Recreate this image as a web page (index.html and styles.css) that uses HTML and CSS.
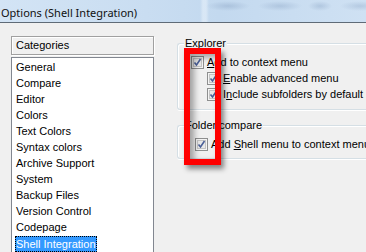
FILE: index.html
```html
<!DOCTYPE html>
<html>
<head>
<meta charset="utf-8">
<link rel="stylesheet" href="styles.css">
</head>
<body>
<div class="titlebar"><span class="title">Options (Shell Integration)</span></div>
<div class="content">
  <div class="left">
    <div class="cat-header">Categories</div>
    <ul class="list">
      <li>General</li>
      <li>Compare</li>
      <li>Editor</li>
      <li>Colors</li>
      <li>Text Colors</li>
      <li>Syntax colors</li>
      <li>Archive Support</li>
      <li>System</li>
      <li>Backup Files</li>
      <li>Version Control</li>
      <li>Codepage</li>
      <li><span class="sel">Shell Integration</span></li>
    </ul>
  </div>
  <div class="right">
    <div class="group explorer">
      <div class="legend">Explorer</div>
      <label class="row"><span class="cb"><svg width="13" height="13" viewBox="0 0 13 13"><rect x="0.5" y="0.5" width="12" height="12" fill="#f4f4f4" stroke="#8e8f8f"/><rect x="2.5" y="2.5" width="8" height="8" fill="#e8e8e8" stroke="#c4c4c4"/><path d="M3.5 6.5 L5.5 9 L9.5 3" fill="none" stroke="#4a5f97" stroke-width="1.6"/></svg></span><span><u>A</u>dd to context menu</span></label>
      <label class="row sub"><span class="cb"><svg width="13" height="13" viewBox="0 0 13 13"><rect x="0.5" y="0.5" width="12" height="12" fill="#f4f4f4" stroke="#8e8f8f"/><rect x="2.5" y="2.5" width="8" height="8" fill="#e8e8e8" stroke="#c4c4c4"/><path d="M3.5 6.5 L5.5 9 L9.5 3" fill="none" stroke="#4a5f97" stroke-width="1.6"/></svg></span><span><u>E</u>nable advanced menu</span></label>
      <label class="row sub"><span class="cb"><svg width="13" height="13" viewBox="0 0 13 13"><rect x="0.5" y="0.5" width="12" height="12" fill="#f4f4f4" stroke="#8e8f8f"/><rect x="2.5" y="2.5" width="8" height="8" fill="#e8e8e8" stroke="#c4c4c4"/><path d="M3.5 6.5 L5.5 9 L9.5 3" fill="none" stroke="#4a5f97" stroke-width="1.6"/></svg></span><span>I<u>n</u>clude subfolders by default</span></label>
    </div>
    <div class="group folder">
      <div class="legend">Folder compare</div>
      <label class="row"><span class="cb"><svg width="13" height="13" viewBox="0 0 13 13"><rect x="0.5" y="0.5" width="12" height="12" fill="#f4f4f4" stroke="#8e8f8f"/><rect x="2.5" y="2.5" width="8" height="8" fill="#e8e8e8" stroke="#c4c4c4"/><path d="M3.5 6.5 L5.5 9 L9.5 3" fill="none" stroke="#4a5f97" stroke-width="1.6"/></svg></span><span>Add <u>S</u>hell menu to context menu</span></label>
    </div>
  </div>
</div>
<div class="redbox"></div>
</body>
</html>
```
FILE: styles.css
```css
html, body {
  margin: 0;
  padding: 0;
  width: 366px;
  height: 252px;
  overflow: hidden;
  background: #f0f0f0;
  font-family: "Liberation Sans", Arial, sans-serif;
  font-size: 11px;
  color: #000;
  position: relative;
}
.titlebar {
  height: 22px;
  background:
    radial-gradient(ellipse 22px 5px at 228px 6px, rgba(150,175,205,0.55), transparent),
    radial-gradient(ellipse 22px 5px at 280px 6px, rgba(150,175,205,0.5), transparent),
    radial-gradient(ellipse 12px 5px at 320px 6px, rgba(150,175,205,0.5), transparent),
    radial-gradient(ellipse 20px 5px at 360px 6px, rgba(150,175,205,0.45), transparent),
    linear-gradient(90deg, transparent 200px, rgba(230,240,250,0.6) 203px, rgba(230,240,250,0.6) 206px, transparent 209px),
    linear-gradient(90deg, #d3e4f5 0%, #c9ddf1 40%, #c3d9ef 60%, #cfe1f3 100%);
  border-bottom: 1px solid #5f6b77;
  display: flex;
  align-items: center;
}
.title {
  font-family: "Noto Sans", sans-serif;
  font-size: 11px;
  color: #101010;
  padding-left: 1px;
  margin-top: 2px;
}
.content {
  display: flex;
  padding: 13px 0 0 11px;
}
.left {
  width: 143px;
  flex: none;
}
.cat-header {
  height: 17px;
  border: 1px solid #a0a0a0;
  box-shadow: inset 1px 1px 0 #fff, 1px 1px 0 #fff;
  line-height: 17px;
  padding-left: 4px;
}
.list {
  list-style: none;
  margin: 2px 0 0 0;
  padding: 1px 0 0 4px;
  background: #fff;
  border: 1px solid #828790;
  height: 200px;
}
.list li {
  height: 16px;
  line-height: 16px;
  white-space: nowrap;
}
.sel {
  display: inline-block;
  background: #3399ff;
  color: #fff;
  outline: 1px dotted #000;
  outline-offset: -1px;
  padding: 0 1px;
  margin-left: -1px;
  margin-top: 1px;
}
.right {
  margin-left: 23px;
  flex: 1;
  min-width: 0;
  padding-top: 7px;
}
.group {
  border: 1px solid #d5dfe5;
  border-right: none;
  border-radius: 3px 0 0 3px;
  box-shadow: inset 1px 1px 0 #fff, 0 1px 0 #fff;
}
.legend {
  width: fit-content;
  height: 13px;
  background: #f0f0f0;
  margin: -7px 0 0 6px;
  padding: 0 1px;
  line-height: 13px;
}
.explorer {
  height: 65px;
}
.folder {
  margin-top: 15px;
  height: 32px;
}
.row {
  display: flex;
  align-items: center;
  height: 16px;
  padding-left: 13px;
  white-space: nowrap;
}
.explorer .legend + .row {
  margin-top: 4px;
}
.row.sub {
  padding-left: 29px;
}
.folder .row {
  padding-left: 17px;
  margin-top: 4px;
}
.cb {
  width: 13px;
  height: 13px;
  margin-right: 3px;
  display: flex;
}
u {
  text-decoration: underline;
  text-underline-offset: 1px;
}
.redbox {
  position: absolute;
  left: 184px;
  top: 48px;
  width: 25px;
  height: 105px;
  border: 6px solid #ff0000;
  box-shadow: 3px 4px 5px rgba(0,0,0,0.45), inset 4px 3px 6px rgba(0,0,0,0.35);
}
```
